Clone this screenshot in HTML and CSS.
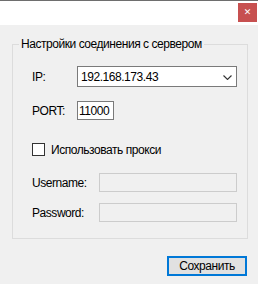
FILE: index.html
```html
<!DOCTYPE html>
<html lang="ru">
<head>
    <title>Настройки</title>
    <link rel="stylesheet" href="styles.css">
</head>
<body>
    <div class="window">
        <!-- Title bar -->
        <div class="titlebar">
            <button class="close-btn" title="Закрыть">&#x2715;</button>
        </div>

        <div class="content">
            <fieldset class="group">
                <legend>Настройки соединения с сервером</legend>

                <div class="group-body">
                    <div class="row row-ip">
                        <label class="lbl lbl-short">IP:</label>
                        <div class="combo">
                            <span class="combo-value">192.168.173.43</span>
                            <svg class="chevron" width="9" height="5" viewBox="0 0 9 5">
                                <path d="M0.5 0.5 L4.5 4.5 L8.5 0.5" fill="none" stroke="#333" stroke-width="1.1"/>
                            </svg>
                        </div>
                    </div>

                    <div class="row row-port">
                        <label class="lbl lbl-short">PORT:</label>
                        <input class="field port" type="text" value="11000">
                    </div>

                    <label class="row row-check">
                        <span class="checkbox"></span>
                        <span>Использовать прокси</span>
                    </label>

                    <div class="row row-user">
                        <label class="lbl lbl-long">Username:</label>
                        <input class="field disabled" type="text" disabled>
                    </div>

                    <div class="row row-pass">
                        <label class="lbl lbl-long">Password:</label>
                        <input class="field disabled" type="password" disabled>
                    </div>
                </div>
            </fieldset>

            <div class="footer">
                <button class="save-btn">Сохранить</button>
            </div>
        </div>
    </div>
</body>
</html>
```

FILE: styles.css
```css
* {
    box-sizing: border-box;
}
body {
    margin: 0;
    font-family: "Liberation Sans", Arial, sans-serif;
    font-size: 12px;
    letter-spacing: -0.45px;
    color: #000;
    background: #f0f0f0;
}
.window {
    width: 258px;
    height: 284px;
    display: flex;
    flex-direction: column;
}
.titlebar {
    height: 25px;
    background: #fff;
    border-top: 1px solid #6e6e6e;
    display: flex;
    justify-content: flex-end;
    padding-top: 2px;
    padding-right: 1px;
}
.close-btn {
    width: 19px;
    height: 19px;
    border: none;
    padding: 0;
    background: #c75050;
    color: #fff;
    font-family: "DejaVu Sans", sans-serif;
    font-size: 9px;
    font-weight: bold;
    line-height: 19px;
    letter-spacing: 0;
}
.content {
    flex: 1;
    background: #f0f0f0;
    padding: 11px 11px 0 12px;
}
.group {
    margin: 0;
    width: 236px;
    border: 1px solid #dcdcdc;
    padding: 0;
}
.group legend {
    margin-left: 6px;
    padding: 0 2px;
    line-height: 16px;
}
.group-body {
    padding: 14px 0 16px 19px;
}
.row {
    display: flex;
    align-items: center;
}
.lbl-short {
    width: 45px;
}
.lbl-long {
    width: 67px;
}
.combo {
    width: 160px;
    height: 21px;
    border: 1px solid #7a7a7a;
    background: #fff;
    display: flex;
    align-items: center;
    justify-content: space-between;
    padding: 0 4px 0 3px;
}
.chevron {
    margin-top: 1px;
}
.row-port {
    margin-top: 14px;
}
.field {
    height: 19px;
    border: 1px solid #7a7a7a;
    background: #fff;
    font: inherit;
    letter-spacing: inherit;
    padding: 0 1px;
    outline: none;
}
.field.port {
    width: 37px;
}
.field.disabled {
    width: 138px;
    border-color: #cccccc;
    background: #f0f0f0;
}
.row-check {
    margin-top: 23px;
    height: 13px;
}
.checkbox {
    width: 13px;
    height: 13px;
    border: 1px solid #333;
    background: #fff;
    margin-right: 6px;
}
.row-user {
    margin-top: 17px;
}
.row-pass {
    margin-top: 11px;
}
.footer {
    display: flex;
    justify-content: flex-end;
    margin-top: 17px;
}
.save-btn {
    width: 80px;
    height: 20px;
    border: 2px solid #0078d7;
    background: #e1e1e1;
    font: inherit;
    letter-spacing: inherit;
    padding: 0;
    line-height: 16px;
}
```
